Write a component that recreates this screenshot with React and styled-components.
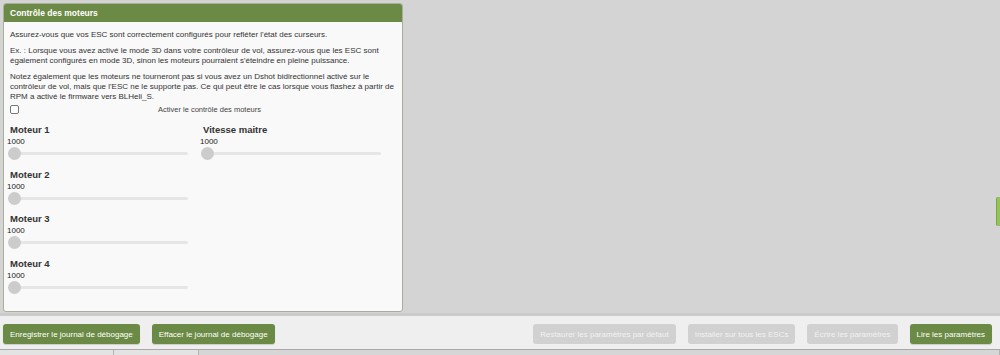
import React from 'react';
import styled, { createGlobalStyle } from 'styled-components';

const GlobalStyle = createGlobalStyle`
  html, body {
    margin: 0;
    padding: 0;
    background: #d4d4d4;
    font-family: 'Liberation Sans', Arial, sans-serif;
  }
`;

const motors = ['Moteur 1', 'Moteur 2', 'Moteur 3', 'Moteur 4'];

const Slider = ({ label }) => (
  <SliderBlock>
    <SliderLabel>{label}</SliderLabel>
    <SliderValue>1000</SliderValue>
    <Range type="range" min="1000" max="2000" defaultValue="1000" disabled />
  </SliderBlock>
);

const App = () => {
  return (
    <Page>
      <GlobalStyle />
      <Content>
        <Panel>
          <PanelHeader>Contrôle des moteurs</PanelHeader>
          <PanelBody>
            <Note>Assurez-vous que vos ESC sont correctement configurés pour refléter l'état des curseurs.</Note>
            <Note>
              Ex. : Lorsque vous avez activé le mode 3D dans votre contrôleur de vol, assurez-vous que les ESC sont
              également configurés en mode 3D, sinon les moteurs pourraient s'éteindre en pleine puissance.
            </Note>
            <Note>
              Notez également que les moteurs ne tourneront pas si vous avez un Dshot bidirectionnel activé sur le
              contrôleur de vol, mais que l'ESC ne le supporte pas. Ce qui peut être le cas lorsque vous flashez à partir de
              RPM a activé le firmware vers BLHeli_S.
            </Note>
            <EnableRow>
              <Check type="checkbox" />
              <EnableLabel>Activer le contrôle des moteurs</EnableLabel>
            </EnableRow>
            <SliderGrid>
              <Column>
                {motors.map((m) => (
                  <Slider key={m} label={m} />
                ))}
              </Column>
              <Column>
                <Slider label="Vitesse maitre" />
              </Column>
            </SliderGrid>
          </PanelBody>
        </Panel>
        <SideTab />
      </Content>
      <Toolbar>
        <ButtonGroup>
          <Button>Enregistrer le journal de débogage</Button>
          <Button>Effacer le journal de débogage</Button>
        </ButtonGroup>
        <ButtonGroup>
          <Button disabled>Restaurer les paramètres par défaut</Button>
          <Button disabled>Installer sur tous les ESCs</Button>
          <Button disabled>Écrire les paramètres</Button>
          <Button>Lire les paramètres</Button>
        </ButtonGroup>
      </Toolbar>
      <StatusBar>
        <StatusCell $w={113} />
        <StatusCell $w={84} />
        <StatusCell />
      </StatusBar>
    </Page>
  );
};

const Page = styled.div`
  width: 1000px;
  height: 355px;
  display: flex;
  flex-direction: column;
  overflow: hidden;
  background: #d4d4d4;
`;

const Content = styled.div`
  position: relative;
  height: 313px;
  padding: 3px 0 0 3px;
  box-sizing: border-box;
`;

const Panel = styled.section`
  width: 400px;
  height: 309px;
  box-sizing: border-box;
  border: 1px solid #a7b096;
  border-radius: 3px;
  background: #f9f9f9;
  overflow: hidden;
`;

const PanelHeader = styled.div`
  height: 18px;
  line-height: 18px;
  background: #6b8a45;
  color: #fff;
  font-weight: bold;
  font-size: 8.5px;
  padding-left: 6px;
`;

const PanelBody = styled.div`
  padding: 8px 6px 0 6px;
  color: #333;
  font-size: 8px;
`;

const Note = styled.p`
  margin: 0 0 6px 0;
  line-height: 10px;
`;

const EnableRow = styled.div`
  display: flex;
  align-items: center;
  height: 12px;
  margin-top: -5px;
`;

const Check = styled.input`
  appearance: none;
  width: 9px;
  height: 9px;
  margin: 0;
  border: 1px solid #767676;
  border-radius: 2px;
  background: #fff;
  box-sizing: border-box;
`;

const EnableLabel = styled.span`
  flex: 1;
  text-align: center;
  font-size: 7.5px;
  color: #444;
  margin-left: 4px;
`;

const SliderGrid = styled.div`
  display: grid;
  grid-template-columns: 181px 181px;
  column-gap: 12px;
  margin-top: 9px;
  margin-left: -3px;
`;

const Column = styled.div`
  display: flex;
  flex-direction: column;
`;

const SliderBlock = styled.div`
  display: flex;
  flex-direction: column;
  height: 44.7px;
`;

const SliderLabel = styled.div`
  font-weight: bold;
  font-size: 9.5px;
  color: #333;
  padding-left: 3px;
  line-height: 12px;
`;

const SliderValue = styled.div`
  font-size: 8px;
  color: #222;
  line-height: 11px;
`;

const Range = styled.input`
  appearance: none;
  -webkit-appearance: none;
  width: 180px;
  height: 13px;
  margin: 0 0 0 1px;
  background: transparent;

  &::-webkit-slider-runnable-track {
    height: 3px;
    background: #e6e6e6;
    border-radius: 2px;
  }

  &::-webkit-slider-thumb {
    -webkit-appearance: none;
    width: 13px;
    height: 13px;
    border-radius: 50%;
    background: #cccccc;
    margin-top: -5px;
  }
`;

const SideTab = styled.div`
  position: absolute;
  right: 0;
  top: 197px;
  width: 3px;
  height: 29px;
  background: #95c25a;
  border-left: 1px solid #7aa840;
  border-radius: 2px 0 0 2px;
`;

const Toolbar = styled.div`
  height: 36px;
  box-sizing: border-box;
  border-top: 3px solid #cbcbcb;
  background: #efefef;
  display: flex;
  justify-content: space-between;
  align-items: flex-start;
  padding: 8px 8px 0 3px;
`;

const ButtonGroup = styled.div`
  display: flex;
  gap: 12px;
`;

const Button = styled.button`
  height: 20px;
  padding: 0 7px;
  border: none;
  border-radius: 3px;
  font-family: 'Liberation Sans', Arial, sans-serif;
  font-size: 8px;
  color: ${(p) => (p.disabled ? '#f2f2f2' : '#fff')};
  background: ${(p) => (p.disabled ? '#d1d1d1' : '#6b8a45')};
  box-shadow: ${(p) => (p.disabled ? 'none' : '0 1px 1px rgba(0,0,0,0.15)')};
`;

const StatusBar = styled.div`
  flex: 1;
  display: flex;
  background: #d9d9d9;
  border-top: 1px solid #a9a9a9;
`;

const StatusCell = styled.div`
  width: ${(p) => (p.$w ? `${p.$w}px` : 'auto')};
  flex: ${(p) => (p.$w ? 'none' : '1')};
  border-right: 1px solid #b3b3b3;
  background: ${(p) => (p.$w ? '#e3e3e3' : '#d6d6d6')};
`;

export default App;
